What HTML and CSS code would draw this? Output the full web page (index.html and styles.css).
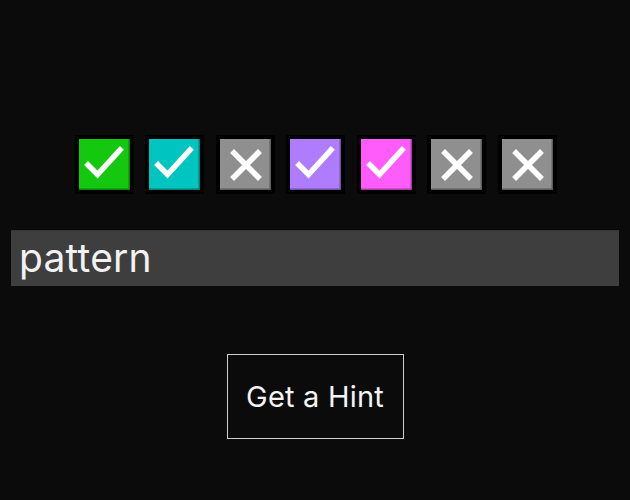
FILE: index.html
```html
<!DOCTYPE html>
<html>
<head>
<meta charset="utf-8">
<link rel="stylesheet" href="styles.css">
</head>
<body>
<main class="page">
  <div class="tiles">
    <div class="tile"><div class="face green"><svg viewBox="0 0 51 51"><path class="mark" d="M9 26 L18.5 35.5 L41 11"/></svg></div></div>
    <div class="tile"><div class="face cyan"><svg viewBox="0 0 51 51"><path class="mark" d="M9 26 L18.5 35.5 L41 11"/></svg></div></div>
    <div class="tile"><div class="face gray"><svg viewBox="0 0 51 51"><path class="mark" d="M14 14 L38 38 M38 14 L14 38"/></svg></div></div>
    <div class="tile"><div class="face purple"><svg viewBox="0 0 51 51"><path class="mark" d="M9 26 L18.5 35.5 L41 11"/></svg></div></div>
    <div class="tile"><div class="face pink"><svg viewBox="0 0 51 51"><path class="mark" d="M9 26 L18.5 35.5 L41 11"/></svg></div></div>
    <div class="tile"><div class="face gray"><svg viewBox="0 0 51 51"><path class="mark" d="M14 14 L38 38 M38 14 L14 38"/></svg></div></div>
    <div class="tile"><div class="face gray"><svg viewBox="0 0 51 51"><path class="mark" d="M14 14 L38 38 M38 14 L14 38"/></svg></div></div>
  </div>
  <div class="guess">pattern</div>
  <button class="hint">Get a Hint</button>
</main>
</body>
</html>
```

FILE: styles.css
```css
html, body {
  margin: 0;
  padding: 0;
  background: #0b0b0b;
}
body {
  width: 630px;
  height: 500px;
  overflow: hidden;
  font-family: Inter, "Noto Sans", sans-serif;
}
.page {
  display: flex;
  flex-direction: column;
  align-items: center;
  padding: 135px 11px 0;
}
.tiles {
  display: flex;
  gap: 11.5px;
  margin-left: 1px;
}
.tile {
  background: #000;
  padding: 4px;
  width: 51px;
  height: 51px;
}
.face {
  width: 51px;
  height: 51px;
  box-shadow: inset -1.5px -1.5px 0 rgba(0,0,0,0.35);
}
.face svg {
  display: block;
  width: 51px;
  height: 51px;
}
.mark {
  fill: none;
  stroke: #fff;
  stroke-width: 5.5;
  stroke-linecap: square;
  stroke-linejoin: miter;
}
.green { background: #14c80f; }
.cyan { background: #00c4bf; }
.gray { background: #8f8f8f; }
.purple { background: #ae7cfd; }
.pink { background: #ff5cfb; }
.guess {
  align-self: stretch;
  margin-top: 36px;
  height: 56px;
  box-sizing: border-box;
  background: #3e3e3e;
  border-top: 1px solid #353535;
  color: #f2f2f2;
  font-size: 39px;
  line-height: 54px;
  padding-left: 8px;
  letter-spacing: 0.2px;
}
.hint {
  margin-top: 68px;
  width: 177px;
  height: 85px;
  background: transparent;
  border: 1px solid #cfcfcf;
  color: #f4f4f4;
  font-family: Inter, "Noto Sans", sans-serif;
  font-size: 29px;
  letter-spacing: 0.2px;
  padding: 0;
}
```
